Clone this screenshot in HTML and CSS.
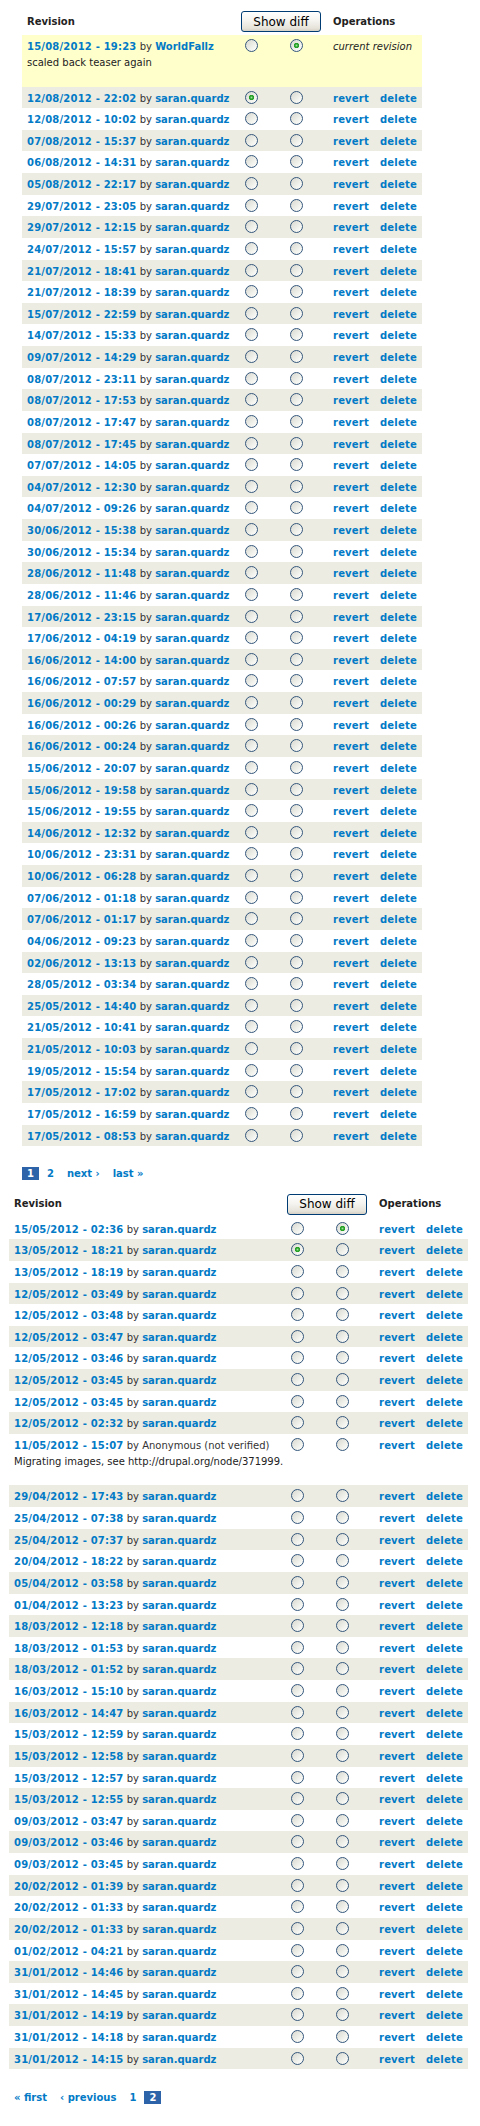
FILE: index.html
```html
<!DOCTYPE html>
<html lang="en">
<head>
  <meta charset="UTF-8" />
  <meta name="viewport" content="width=device-width, initial-scale=1.0"/>
  <title>Revisions</title>
  <link rel="stylesheet" href="styles.css">
</head>
<body>
  <div class="page page-one">
    <form class="revisions" id="revisionsOne">
      <div class="rev-row rev-head">
        <div class="cell">Revision</div>
        <div class="cell span-2 diff-cell"><button type="button" class="diff-btn">Show diff</button></div>
        <div class="cell span-2">Operations</div>
      </div>
    </form>
    <ul class="pager">
      <li class="pager-current num">1</li>
      <li class="num"><a href="#">2</a></li>
      <li><a href="#">next ›</a></li>
      <li><a href="#">last »</a></li>
    </ul>
  </div>

  <div class="page page-two">
    <form class="revisions wide" id="revisionsTwo">
      <div class="rev-row rev-head">
        <div class="cell">Revision</div>
        <div class="cell span-2 diff-cell"><button type="button" class="diff-btn">Show diff</button></div>
        <div class="cell span-2">Operations</div>
      </div>
    </form>
    <ul class="pager">
      <li><a href="#">« first</a></li>
      <li><a href="#">‹ previous</a></li>
      <li class="num"><a href="#">1</a></li>
      <li class="pager-current num">2</li>
    </ul>
  </div>

  <script>
    const pageOne = [
      { date: "15/08/2012 - 19:23", user: "WorldFallz", log: "scaled back teaser again", current: true },
      "12/08/2012 - 22:02", "12/08/2012 - 10:02", "07/08/2012 - 15:37", "06/08/2012 - 14:31",
      "05/08/2012 - 22:17", "29/07/2012 - 23:05", "29/07/2012 - 12:15", "24/07/2012 - 15:57",
      "21/07/2012 - 18:41", "21/07/2012 - 18:39", "15/07/2012 - 22:59", "14/07/2012 - 15:33",
      "09/07/2012 - 14:29", "08/07/2012 - 23:11", "08/07/2012 - 17:53", "08/07/2012 - 17:47",
      "08/07/2012 - 17:45", "07/07/2012 - 14:05", "04/07/2012 - 12:30", "04/07/2012 - 09:26",
      "30/06/2012 - 15:38", "30/06/2012 - 15:34", "28/06/2012 - 11:48", "28/06/2012 - 11:46",
      "17/06/2012 - 23:15", "17/06/2012 - 04:19", "16/06/2012 - 14:00", "16/06/2012 - 07:57",
      "16/06/2012 - 00:29", "16/06/2012 - 00:26", "16/06/2012 - 00:24", "15/06/2012 - 20:07",
      "15/06/2012 - 19:58", "15/06/2012 - 19:55", "14/06/2012 - 12:32", "10/06/2012 - 23:31",
      "10/06/2012 - 06:28", "07/06/2012 - 01:18", "07/06/2012 - 01:17", "04/06/2012 - 09:23",
      "02/06/2012 - 13:13", "28/05/2012 - 03:34", "25/05/2012 - 14:40", "21/05/2012 - 10:41",
      "21/05/2012 - 10:03", "19/05/2012 - 15:54", "17/05/2012 - 17:02", "17/05/2012 - 16:59",
      "17/05/2012 - 08:53"
    ];

    const pageTwo = [
      "15/05/2012 - 02:36", "13/05/2012 - 18:21", "13/05/2012 - 18:19", "12/05/2012 - 03:49",
      "12/05/2012 - 03:48", "12/05/2012 - 03:47", "12/05/2012 - 03:46", "12/05/2012 - 03:45",
      "12/05/2012 - 03:45", "12/05/2012 - 02:32",
      { date: "11/05/2012 - 15:07", user: null, log: "Migrating images, see http://drupal.org/node/371999." },
      "29/04/2012 - 17:43", "25/04/2012 - 07:38", "25/04/2012 - 07:37", "20/04/2012 - 18:22",
      "05/04/2012 - 03:58", "01/04/2012 - 13:23", "18/03/2012 - 12:18", "18/03/2012 - 01:53",
      "18/03/2012 - 01:52", "16/03/2012 - 15:10", "16/03/2012 - 14:47", "15/03/2012 - 12:59",
      "15/03/2012 - 12:58", "15/03/2012 - 12:57", "15/03/2012 - 12:55", "09/03/2012 - 03:47",
      "09/03/2012 - 03:46", "09/03/2012 - 03:45", "20/02/2012 - 01:39", "20/02/2012 - 01:33",
      "20/02/2012 - 01:33", "01/02/2012 - 04:21", "31/01/2012 - 14:46", "31/01/2012 - 14:45",
      "31/01/2012 - 14:19", "31/01/2012 - 14:18", "31/01/2012 - 14:15"
    ];

    function renderRevisions(formId, rows) {
      const form = document.getElementById(formId);

      rows.forEach((r, i) => {
        if (typeof r === "string") r = { date: r };
        const user = r.user === undefined ? "saran.quardz" : r.user;

        const row = document.createElement("div");
        row.className = "rev-row " + (i % 2 ? "even" : "odd") + (r.current ? " current" : "");

        const info = document.createElement("div");
        info.className = "cell rev-info";
        info.innerHTML = '<a href="#" class="rev-date">' + r.date + "</a> by " +
          (user ? '<a href="#">' + user + "</a>" : "Anonymous (not verified)") +
          (r.log ? '<div class="log">' + r.log + "</div>" : "");
        row.append(info);

        // left column picks the older revision, right column the newer one
        ["old", "new"].forEach((side, col) => {
          const cell = document.createElement("div");
          cell.className = "cell radio";
          const rb = document.createElement("input");
          rb.type = "radio";
          rb.name = formId + "-" + side;
          rb.checked = (col === 0 && i === 1) || (col === 1 && i === 0);
          cell.append(rb);
          row.append(cell);
        });

        if (r.current) {
          const ops = document.createElement("div");
          ops.className = "cell span-2";
          ops.innerHTML = "<em>current revision</em>";
          row.append(ops);
        } else {
          ["revert", "delete"].forEach(op => {
            const ops = document.createElement("div");
            ops.className = "cell op";
            ops.innerHTML = '<a href="#">' + op + "</a>";
            row.append(ops);
          });
        }

        form.append(row);
      });
    }

    renderRevisions("revisionsOne", pageOne);
    renderRevisions("revisionsTwo", pageTwo);
  </script>
</body>
</html>
```

FILE: styles.css
```css
* { box-sizing: border-box; }

body {
  margin: 0;
  background: #fff;
  font-family: "DejaVu Sans", Verdana, sans-serif;
  font-size: 10px;
  line-height: 16px;
  color: #333;
}

a {
  color: #027ac6;
  font-weight: bold;
  text-decoration: none;
}

/* revision list, one grid per row */
.revisions {
  --cols: 218px 45px 43px 47px 47px;
  width: 400px;
  margin: 0;
}

.revisions.wide {
  --cols: 277px 45px 43px 47px 47px;
  width: 459px;
}

.page-one { padding: 8px 0 0 22px; }
.page-two { padding: 11px 0 0 9px; }

.rev-row {
  display: grid;
  grid-template-columns: var(--cols);
  min-height: 21.63px;
}

.rev-row.odd { background: #fff; }
.rev-row.even { background: #edece2; }
.rev-row.current { background: #ffffcc; }

.cell {
  padding: 4px 5px 0;
  white-space: nowrap;
}

.span-2 { grid-column: span 2; }

.rev-head {
  height: 27px;
  align-items: center;
  font-weight: bold;
  color: #222;
}

.rev-head .cell { padding: 0 5px; }
.rev-head .diff-cell { padding: 0 0 0 1px; }

.diff-btn {
  display: block;
  width: 80px;
  height: 21px;
  padding: 0;
  font-family: "DejaVu Sans", Tahoma, sans-serif;
  font-size: 12px;
  color: #000;
  border: 1px solid #003c74;
  border-radius: 3px;
  background: linear-gradient(#fff 0%, #f5f4f0 45%, #e6e3da 85%, #d6d0c5 100%);
}

.rev-date, .op a { letter-spacing: 0.2px; }

.log {
  font-weight: normal;
  color: #222;
  padding-bottom: 15.5px;
}

em { font-style: italic; color: #222; }

/* old-school radio buttons */
.radio input {
  -webkit-appearance: none;
  appearance: none;
  display: block;
  margin: 0;
  width: 13px;
  height: 13px;
  border: 1px solid #34577c;
  border-radius: 50%;
  background: linear-gradient(135deg, #d8d8d0 0%, #efefea 55%, #fff 100%);
}

.radio input:checked {
  background:
    radial-gradient(circle, #9ae59a 0, #2ca02c 1.6px, #21a121 2.4px, transparent 3px),
    linear-gradient(135deg, #d8d8d0 0%, #efefea 55%, #fff 100%);
}

/* pager */
.pager {
  list-style: none;
  margin: 0;
  padding: 0;
  display: flex;
  align-items: center;
  gap: 3px;
  height: 13px;
  font-weight: bold;
}

.page-one .pager { margin-top: 20.6px; }
.page-two .pager { margin-top: 22px; }

.pager li {
  padding: 0 5px;
  line-height: 13px;
}

.pager-current {
  background: #2d63a8;
  color: #fff;
}
```
